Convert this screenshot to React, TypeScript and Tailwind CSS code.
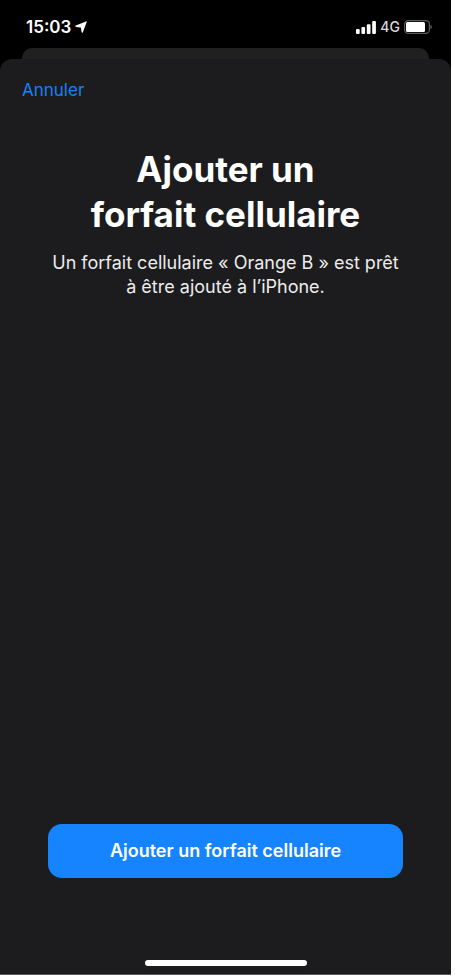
import React from 'react';

const LocationArrow: React.FC = () => (
  <svg viewBox="0 0 12 12" className="w-3 h-3" fill="currentColor" aria-hidden="true">
    <path d="M11.7 1 7.9 11.2c-.3.8-1.3.7-1.4-.2L6 6.9c0-.3-.2-.5-.5-.5L1 5.9C.1 5.8 0 4.900.8 4.600L11 .4c.6-.2.9.1.7.6Z" />
  </svg>
);

const SignalBars: React.FC = () => (
  <svg viewBox="0 0 20 13" className="w-5 h-[13px]" fill="currentColor" aria-hidden="true">
    <rect x="0" y="8" width="3.7" height="5" rx="0.9" />
    <rect x="5.4" y="6" width="3.7" height="7" rx="0.9" />
    <rect x="10.8" y="3.2" width="3.7" height="9.8" rx="0.9" />
    <rect x="16.2" y="0" width="3.7" height="13" rx="0.9" />
  </svg>
);

const Battery: React.FC = () => (
  <svg viewBox="0 0 28 14" className="w-7 h-3.5" aria-hidden="true">
    <rect x="0.6" y="0.6" width="24.8" height="12.8" rx="3.6" fill="none" stroke="#5a5a5a" strokeWidth="1.2" />
    <rect x="2" y="2" width="19" height="10" rx="1.5" fill="#fff" />
    <path d="M26.4 4.8c.9.4 1.5 1.2 1.5 2.2s-.6 1.8-1.5 2.2Z" fill="#5a5a5a" />
  </svg>
);

const StatusBar: React.FC = () => (
  <header className="flex items-center justify-between h-12 pl-[26px] pr-[19px] pt-1.5 text-white">
    <div className="flex items-center gap-1">
      <span className="text-[17px] leading-6 font-semibold">15:03</span>
      <LocationArrow />
    </div>
    <div className="flex items-center gap-1">
      <SignalBars />
      <span className="text-sm leading-5 font-medium text-[#d8d8d8]">4G</span>
      <Battery />
    </div>
  </header>
);

const App: React.FC = () => {
  return (
    <div className="flex flex-col min-h-screen bg-white pr-1 pb-0.5 font-['Inter',sans-serif]">
      <div className="flex flex-col flex-1 bg-black border-b border-[#5c595a]">
        <StatusBar />
        <div className="h-[11px] mx-[22px] rounded-t-[10px] bg-[#202020]"></div>
        <div className="flex flex-col flex-1 rounded-t-[12px] bg-[#1c1c1e]">
          <nav className="px-[22px] pt-[19px]">
            <button type="button" className="block text-[17px] leading-6 text-[#1681f5]">
              Annuler
            </button>
          </nav>
          <main className="flex flex-col flex-1 items-center px-12 pt-[45px] text-center">
            <h1 className="text-[35px] leading-[45px] font-bold text-white">
              Ajouter un
              <br />
              forfait cellulaire
            </h1>
            <p className="mt-[14px] text-lg leading-6 text-[#ececec] whitespace-nowrap">
              Un forfait cellulaire «&nbsp;Orange B&nbsp;» est prêt
              <br />
              à être ajouté à l’iPhone.
            </p>
            <button
              type="button"
              className="w-full h-[54px] mt-auto rounded-[14px] bg-[#1684ff] text-lg font-semibold text-white"
            >
              Ajouter un forfait cellulaire
            </button>
          </main>
          <footer className="flex justify-center pt-[82px] pb-2">
            <div className="w-[162px] h-1.5 rounded-full bg-white"></div>
          </footer>
        </div>
      </div>
    </div>
  );
};

export default App;
